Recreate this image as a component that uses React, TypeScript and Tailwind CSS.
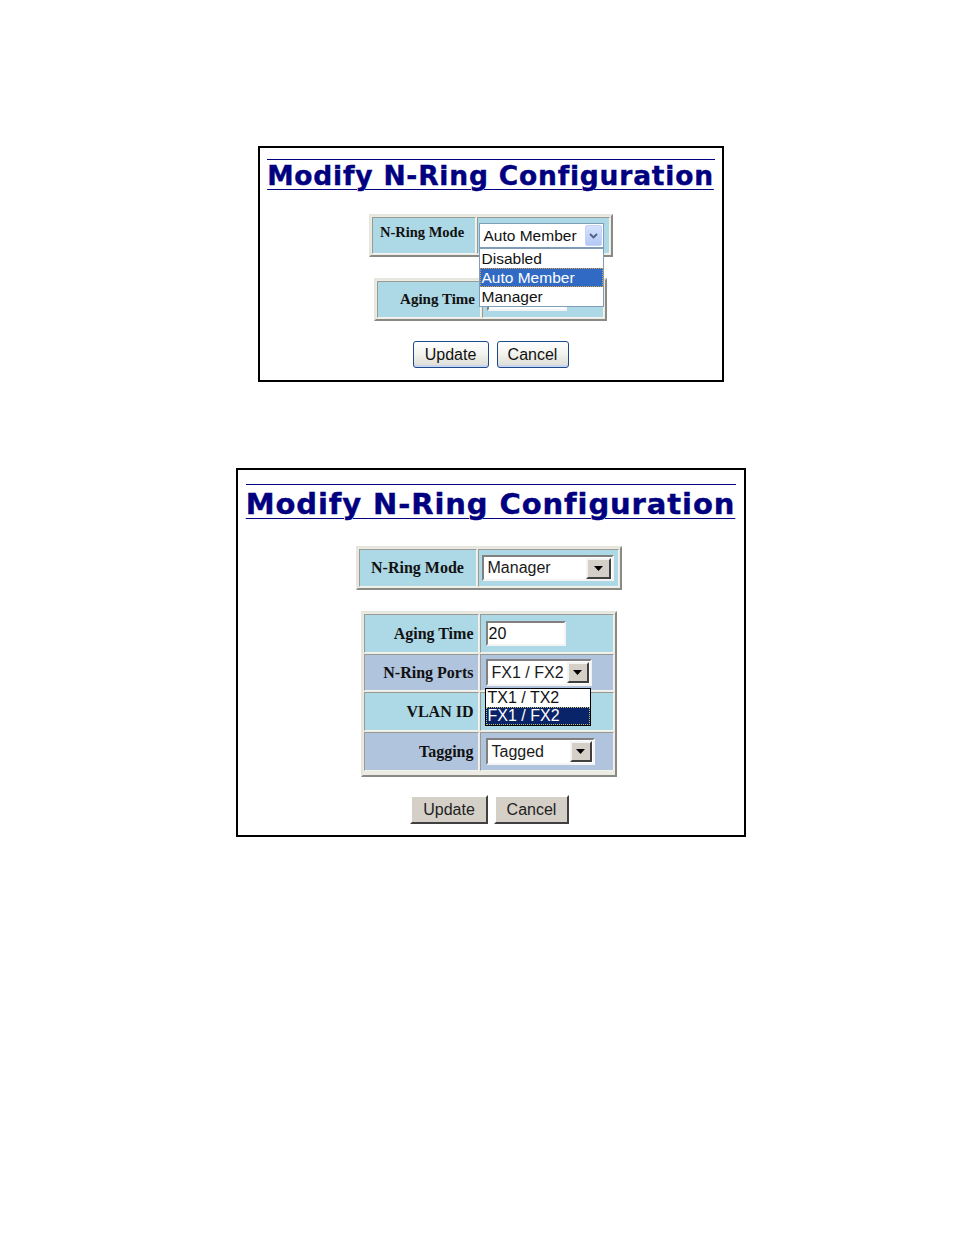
import React from 'react';

const serif = { fontFamily: '"Liberation Serif", "Times New Roman", serif' };
const sans = { fontFamily: '"Liberation Sans", Arial, sans-serif' };

function Title({ size }: { size: string }) {
  return (
    <div className="self-stretch border-t border-[#000080] text-center">
      <span
        className={`${size} font-bold text-[#000080] underline decoration-1 underline-offset-[4px] whitespace-nowrap [font-variant-ligatures:none] [-webkit-text-stroke:0.4px_#000080]`}
        style={{ fontFamily: '"DejaVu Sans", Verdana, sans-serif' }}
      >
        Modify N-Ring Configuration
      </span>
    </div>
  );
}

// HTML border=2 table look
function Frame({ className = '', children }: { className?: string; children: React.ReactNode }) {
  return (
    <div
      className={`border-2 border-t-[#e6e6de] border-l-[#e6e6de] border-b-[#8a8a84] border-r-[#8a8a84] bg-[#ecece4] p-px flex flex-col gap-px ${className}`}
    >
      {children}
    </div>
  );
}

function Cell({ className = '', children }: { className?: string; children?: React.ReactNode }) {
  return (
    <div
      className={`border border-t-[#9a9a94] border-l-[#9a9a94] border-b-[#f4f4ee] border-r-[#f4f4ee] flex items-center ${className}`}
    >
      {children}
    </div>
  );
}

function ClassicArrow({ className }: { className: string }) {
  return (
    <div className={`bg-[#d4d0c8] border-2 border-t-[#f4f4f4] border-l-[#f4f4f4] border-b-[#404040] border-r-[#404040] flex items-center justify-center ${className}`}>
      <svg width="9" height="5" viewBox="0 0 9 5">
        <path d="M0 0h9L4.5 5z" fill="#000" />
      </svg>
    </div>
  );
}

function ClassicSelect({ value, className, arrow }: { value: string; className: string; arrow: string }) {
  return (
    <div
      className={`border-2 border-t-[#808080] border-l-[#808080] border-b-[#f4f4f4] border-r-[#f4f4f4] bg-white flex items-center justify-between pl-[4px] pr-px ${className}`}
    >
      <span className="text-[16px] text-[#1a1a1a] leading-none" style={sans}>
        {value}
      </span>
      <ClassicArrow className={arrow} />
    </div>
  );
}

function ClassicButton({ label, className }: { label: string; className: string }) {
  return (
    <button
      className={`bg-[#d4d0c8] border-2 border-t-[#ffffff] border-l-[#ffffff] border-b-[#404040] border-r-[#404040] text-[16px] text-[#222] ${className}`}
      style={sans}
    >
      {label}
    </button>
  );
}

function XpButton({ label, className }: { label: string; className: string }) {
  return (
    <button
      className={`rounded-[3px] border border-[#1c4a8a] bg-gradient-to-b from-[#ffffff] via-[#f2f2ee] to-[#dcdcd4] text-[16px] text-[#111] shadow-[inset_0_-2px_0_#c8d4f0] ${className}`}
      style={sans}
    >
      {label}
    </button>
  );
}

function PanelOne() {
  return (
    <div className="w-[466px] h-[236px] border-2 border-black flex flex-col items-center px-[7px]">
      <div className="mt-[11px] self-stretch">
        <Title size="text-[26.5px] leading-[31px] tracking-[0.8px]" />
      </div>

      <div className="relative mt-[23px]">
        <Frame className="w-[244px] h-[43px] flex-row">
          <Cell className="w-[104px] bg-[#add8e6] justify-center items-start pt-[4px] pr-[3px]">
            <span className="text-[14.5px] font-bold text-[#111]" style={serif}>N-Ring Mode</span>
          </Cell>
          <Cell className="flex-1 bg-[#add8e6] pl-[1px]">
            <div className="w-[125px] h-[25px] border border-[#7f9db9] bg-white flex items-center justify-between pl-[4px] pr-px">
              <span className="text-[15.5px] text-[#111] leading-none" style={sans}>Auto Member</span>
              <div className="w-[17px] h-[21px] rounded-[2px] bg-gradient-to-b from-[#d6e2fc] to-[#b4c8f6] border border-[#c3d3fd] flex items-center justify-center">
                <svg width="9" height="6" viewBox="0 0 9 6">
                  <path d="M1 1l3.5 3.5L8 1" stroke="#4d6185" strokeWidth="1.8" fill="none" />
                </svg>
              </div>
            </div>
          </Cell>
        </Frame>

        <div className="absolute left-[110px] top-[34px] z-10 w-[125px] border border-[#7f9db9] bg-white flex flex-col text-[15.5px] leading-[19px] text-[#111]" style={sans}>
          <div className="pl-[2px]">Disabled</div>
          <div className="pl-[2px] bg-[#316ac5] text-white outline outline-1 -outline-offset-1 outline-dotted outline-[#e0a040]">Auto Member</div>
          <div className="pl-[2px]">Manager</div>
        </div>
      </div>

      <div className="mt-[21px]">
        <Frame className="w-[233px] h-[43px] flex-row">
          <Cell className="w-[104px] bg-[#add8e6] justify-end pr-[5px]">
            <span className="text-[15px] font-bold text-[#111]" style={serif}>Aging Time</span>
          </Cell>
          <Cell className="flex-1 bg-[#add8e6] pl-[4px]">
            <div className="w-[80px] h-[23px] border-2 border-t-[#808080] border-l-[#808080] border-b-[#f4f4f4] border-r-[#f4f4f4] bg-white" />
          </Cell>
        </Frame>
      </div>

      <div className="mt-[20px] flex gap-[8px]">
        <XpButton label="Update" className="w-[76px] h-[27px]" />
        <XpButton label="Cancel" className="w-[72px] h-[27px]" />
      </div>
    </div>
  );
}

function PanelTwo() {
  return (
    <div className="w-[510px] h-[369px] border-2 border-black flex flex-col items-center px-[8px]">
      <div className="mt-[14px] self-stretch">
        <Title size="text-[29px] leading-[38px] tracking-[0.9px]" />
      </div>

      <div className="mt-[23px] mr-[4px]">
        <Frame className="w-[266px] h-[44px] flex-row">
          <Cell className="w-[118px] bg-[#add8e6] justify-center">
            <span className="text-[16px] font-bold text-[#111]" style={serif}>N-Ring Mode</span>
          </Cell>
          <Cell className="flex-1 bg-[#add8e6] pl-[3px]">
            <ClassicSelect value="Manager" className="w-[132px] h-[26px]" arrow="w-[25px] h-[21px]" />
          </Cell>
        </Frame>
      </div>

      <div className="relative mt-[21px] mr-[4px]">
        <Frame className="w-[256px] h-[166px]">
          {[
            { label: 'Aging Time', bg: 'bg-[#add8e6]', h: 'h-[39px]' },
            { label: 'N-Ring Ports', bg: 'bg-[#b0c4de]', h: 'h-[37px]' },
            { label: 'VLAN ID', bg: 'bg-[#add8e6]', h: 'h-[39px]' },
            { label: 'Tagging', bg: 'bg-[#b0c4de]', h: 'h-[39px]' },
          ].map((row, i) => (
            <div key={row.label} className={`flex gap-px ${row.h}`}>
              <Cell className={`w-[115px] ${row.bg} justify-end pr-[4px]`}>
                <span className="text-[16px] font-bold text-[#111]" style={serif}>{row.label}</span>
              </Cell>
              <Cell className={`flex-1 ${row.bg} pl-[5px]`}>
                {i === 0 && (
                  <div className="w-[80px] h-[25px] border-2 border-t-[#808080] border-l-[#808080] border-b-[#f4f4f4] border-r-[#f4f4f4] bg-white flex items-center pl-[1px]">
                    <span className="text-[16px] text-[#111] leading-none" style={sans}>20</span>
                  </div>
                )}
                {i === 1 && <ClassicSelect value="FX1 / FX2" className="w-[106px] h-[27px]" arrow="w-[22px] h-[21px]" />}
                {i === 3 && <ClassicSelect value="Tagged" className="w-[109px] h-[27px]" arrow="w-[22px] h-[21px]" />}
              </Cell>
            </div>
          ))}
        </Frame>

        <div className="absolute left-[124px] top-[77px] z-10 w-[106px] border border-black bg-white flex flex-col text-[16px] leading-[18px] text-[#111]" style={sans}>
          <div className="pl-[2px]">TX1 / TX2</div>
          <div className="pl-[2px] bg-[#0a246a] text-white outline outline-1 -outline-offset-1 outline-dotted outline-[#c8c070]">FX1 / FX2</div>
        </div>
      </div>

      <div className="mt-[18px] flex gap-[6px] mr-[2px]">
        <ClassicButton label="Update" className="w-[78px] h-[29px]" />
        <ClassicButton label="Cancel" className="w-[75px] h-[29px]" />
      </div>
    </div>
  );
}

export default function App() {
  return (
    <div className="w-[954px] h-[1235px] bg-white flex flex-col items-center pl-[27px] pt-[146px] gap-[86px]">
      <PanelOne />
      <PanelTwo />
    </div>
  );
}
